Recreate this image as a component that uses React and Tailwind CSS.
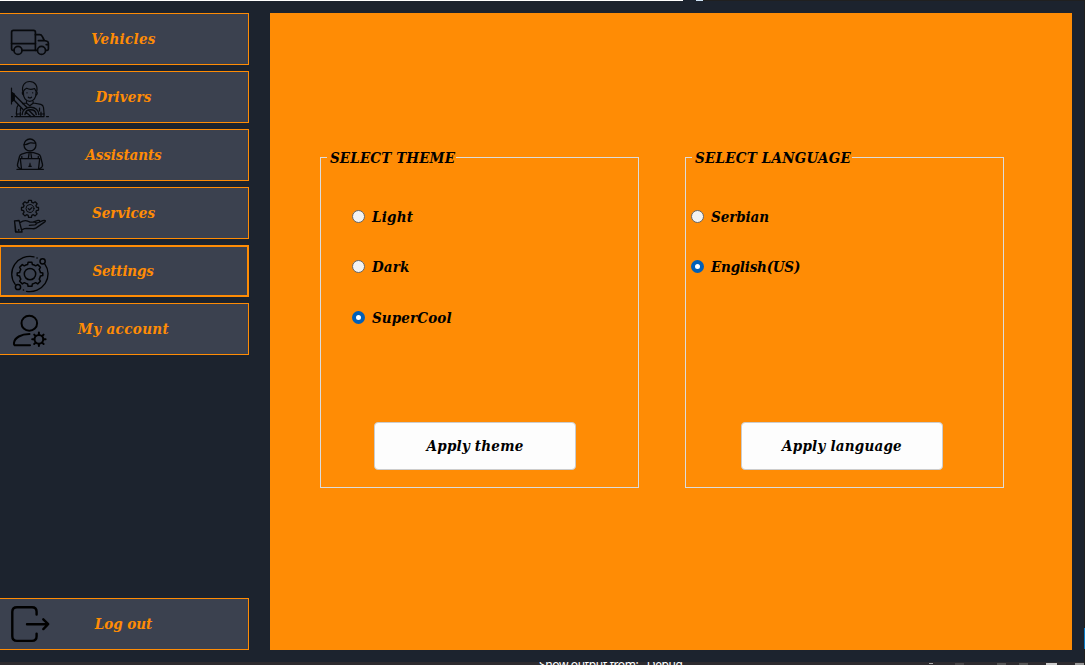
import React from "react";

function TruckIcon() {
  return (
    <svg className="h-[50px] w-[60px] shrink-0" viewBox="0 14 60 50" fill="none" stroke="#07090c" strokeWidth="1.7" strokeLinejoin="round" strokeLinecap="round">
      <path d="M14 50.3h-1.2q-1.2 0-1.2-1.2V32.2q0-1.8 1.8-1.8h20.2q1.8 0 1.8 1.8v18.1H22.3" />
      <path d="M11.6 43.6h23.8M35.4 34.6h4.4q1.6 0 2.3 1.5l2.2 4.4 2.7.8q1.4.5 1.4 2v5.8q0 1.2-1.2 1.2h-1.4M37.3 50.3h-1.900M38.400 40.600h5.700M46.200 44.600h2" />
      <circle cx="18" cy="50.4" r="4" />
      <circle cx="41.5" cy="50.4" r="4" />
    </svg>
  );
}

function DriverIcon() {
  return (
    <svg className="h-[50px] w-[60px] shrink-0" viewBox="0 72 60 50" fill="none" stroke="#07090c" strokeWidth="1.2" strokeLinejoin="round" strokeLinecap="round">
      <path d="M23.400 95c-1.300-.8-1.400-2.700-.5-3.300-1.500-6.300 2-10.200 6.900-10.200s8.400 4 6.800 10.200c1 .8.800 2.600-.5 3.300" />
      <path d="M23.400 92c-.4 6 2.600 9.400 6.300 9.400s6.700-3.400 6.400-9.400M23.400 91.500c.6-1.600 1.600-2.400 3.200-3.200 2.300 1.200 5.700 1.200 8 .2l1.500 3M28.300 97.200q1.600 1.500 3.200 0" />
      <path d="M27 92.500v.6M32.700 92.500v.6" strokeWidth="0.900" />
      <path d="M11.500 88v16" strokeWidth="1.200" />
      <path d="M12 92.500l2.300 1.500v6l-2.300 1.500z" fill="#07090c" />
      <path d="M14 94.500l13 13M13.500 99.500l9.500 10" strokeWidth="1.400" />
      <path d="M26.500 101.400v1.800l3.300 2.600 3.300-2.600v-1.800M33.500 103l7.300 1.300q2.400.7 2.700 3.200l.6 6.500h-4M26 103l-3.500.6M18.400 104.800l-1.400 2.500-.7 6.700h4M20.500 111v-3M39.500 111v-3" />
      <path d="M22.200 114.500c0-4.400 3.600-7.200 8.300-7.200s8.300 2.800 8.300 7.200M25 114.500c.3-3 2.500-4.700 5.600-4.700s5.300 1.700 5.600 4.700M25.800 112l5 4.500M28.500 110l6 6" strokeWidth="1.400" />
      <path d="M16.800 114v2.500M20.300 112v4.500M41 112v4.500M44 114v2.500M11.500 116.600h1M15 116.600h29M46.500 116.600h2" />
    </svg>
  );
}

function AssistantIcon() {
  return (
    <svg className="h-[50px] w-[60px] shrink-0" viewBox="0 130 60 50" fill="none" stroke="#07090c" strokeWidth="1.300" strokeLinejoin="round" strokeLinecap="round">
      <circle cx="30" cy="145" r="6" />
      <path d="M24.200 144.500c3.500.5 4.800-1.700 6-1.700 1.500 0 3 .7 5.600 0" />
      <path d="M26.500 152.600l-4.800 1.600q-1.700.6-2.200 2.300l-2 8c-.4 2 .3 3 2.800 4.100M33.500 152.600l4.800 1.600q1.700.6 2.200 2.300l2 8c.4 2-.3 3-2.800 4.100M26.500 152.600h7M29 154l-.6 4M31 154l.6 4M21.800 158v-1.500M38.300 158v-1.500" />
      <path d="M21.500 169l-1.200-10.300h19.400L38.500 169M17 169.400h26.300" />
      <path d="M30 163.200v1.300M28.900 166.200l1.100-1.700 1.200 1.700z" strokeWidth="1" />
    </svg>
  );
}

function ServiceIcon() {
  return (
    <svg className="h-[50px] w-[60px] shrink-0" viewBox="0 188 60 50" fill="none" stroke="#07090c" strokeWidth="1.300" strokeLinejoin="round" strokeLinecap="round">
      <path d="M28.600 200.300h2.800l.4 2 1.500.7 1.800-1.200 2 2-1.200 1.800.6 1.500 2 .4v2.600l-2 .5-.6 1.500 1.200 1.800-2 2-1.800-1.200-1.500.7-.4 2h-2.800l-.4-2-1.500-.7-1.800 1.200-2-2 1.200-1.800-.6-1.500-2-.5v-2.600l2-.4.6-1.500-1.200-1.800 2-2 1.800 1.200 1.500-.7z" />
      <circle cx="30" cy="208.500" r="4" strokeWidth="1" />
      <path d="M28.300 208.600l1.300 1.300 2.300-2.300" />
      <path d="M14.500 220.800l4.600-.3 3 11.500h-6.600zM14.500 220.800l1.500 11.200M19.800 222.600c3-1.800 5.800-2.500 8-1.400l2.200 1h4.500c2.300 0 2.300 2.500.3 2.700l-5.500.4M36.300 223.300l6.500-2.700c2.200-.8 3.300.2 2 1.300l-8.600 6c-1.300.8-2.600 1-4 .8l-5.500-.3c-2.200 0-3 .5-5 1.500M33.500 221.800l4.500-1.400c1.400-.3 2 .3 1.600 1.200" />
      <path d="M18.700 229.800v.2" strokeWidth="1.800" />
    </svg>
  );
}

function SettingsIcon() {
  return (
    <svg className="h-[50px] w-[60px] shrink-0" viewBox="0 246 60 50" fill="none" stroke="#020304" strokeWidth="1.300" strokeLinejoin="round" strokeLinecap="round">
      <path d="M34 256.800a18.400 17.600 0 0 0-18.800 27.500M26.500 291.300a18.400 17.600 0 0 0 18.200-27.500" />
      <circle cx="42.600" cy="261.300" r="2.600" strokeWidth="1.500" />
      <circle cx="18" cy="287" r="2.600" strokeWidth="1.500" />
      <path d="M37 257.900l.1 0M23.400 290.100l.1 0" strokeWidth="1.500" />
      <circle cx="30" cy="274.100" r="5.700" strokeWidth="1.500" />
      <path strokeWidth="1.500" d="M28.100 262.300h3.800l.5 2.300q1.800.3 3.300 1.200l2-1.200 2.700 2.700-1.200 2q.9 1.500 1.200 3.200l2.400.5v2.500l-2.400.5q-.3 1.700-1.200 3.200l1.200 2-2.700 2.700-2-1.200q-1.500.9-3.300 1.200l-.5 2.400h-3.800l-.5-2.400q-1.800-.3-3.300-1.200l-2 1.200-2.700-2.700 1.200-2q-.9-1.500-1.200-3.200l-2.400-.5v-2.500l2.400-.5q.3-1.700 1.200-3.200l-1.200-2 2.700-2.700 2 1.200q1.500-.9 3.300-1.200z" />
    </svg>
  );
}

function AccountIcon() {
  return (
    <svg className="h-[50px] w-[60px] shrink-0" viewBox="0 304 60 50" fill="none" stroke="#000" strokeWidth="2" strokeLinejoin="round" strokeLinecap="round">
      <ellipse cx="29.300" cy="323.200" rx="7.800" ry="7.500" />
      <path d="M30 345.300H15.700c-1.500 0-1.900-1-1.700-2.500.7-5.300 7-8.600 15.500-8.700" />
      <circle cx="38.900" cy="339.300" r="4.400" />
      <path d="M38.900 332.600v2M38.900 344v2M32.200 339.300h2M43.600 339.300h2M34.200 334.600l1.400 1.400M42.200 342.600l1.400 1.400M34.200 344l1.400-1.400M42.200 336l1.400-1.400" />
    </svg>
  );
}

function LogoutIcon() {
  return (
    <svg className="h-[50px] w-[60px] shrink-0" viewBox="0 599 60 50" fill="none" stroke="#000" strokeWidth="2.400" strokeLinejoin="round" strokeLinecap="round">
      <path d="M36.600 614.500v-2.700q0-4.600-4.600-4.600H17q-4.700 0-4.700 4.600v24.500q0 4.600 4.700 4.600h15q4.600 0 4.600-4.600v-2.700" />
      <path d="M27 624.200h21M43.300 619.300l4.900 4.900-4.900 4.900" />
    </svg>
  );
}

const items = [
  { label: "Vehicles", Icon: TruckIcon, track: "tracking-[0.3px]" },
  { label: "Drivers", Icon: DriverIcon, track: "tracking-[0.15px]" },
  { label: "Assistants", Icon: AssistantIcon, track: "tracking-[-0.08px]" },
  { label: "Services", Icon: ServiceIcon, track: "tracking-[0.05px]" },
  { label: "Settings", Icon: SettingsIcon, track: "tracking-[-0.2px]", active: true },
  { label: "My account", Icon: AccountIcon, track: "tracking-[0.38px]" },
];

function NavButton({ label, Icon, track, active }) {
  return (
    <button
      className={
        "flex h-[52px] w-[249px] shrink-0 items-center border-[#ff8c05] bg-[#3b414f] text-[#ff8c05] " +
        (active ? "border-2 border-l" : "border border-l-0")
      }
    >
      <span className={active ? "-ml-px flex" : "flex"}>
        <Icon />
      </span>
      <span className={"mr-[61px] flex-1 whitespace-nowrap text-center " + track}>{label}</span>
    </button>
  );
}

function Radio({ name, label, checked, track = "" }) {
  return (
    <label className={"flex h-[19px] items-center gap-[7px] " + track}>
      <input
        type="radio"
        name={name}
        defaultChecked={checked}
        className="size-[13px] appearance-none rounded-full border border-[#666] bg-[#f3f3f3] checked:border-4 checked:border-[#005fb8] checked:bg-white"
      />
      <span className="pt-[2px]">{label}</span>
    </label>
  );
}

function Group({ title, track, children }) {
  return (
    <fieldset className="h-[340px] w-[319px] border border-[#dcdcdc]">
      <legend className={"ml-[6px] h-[19px] whitespace-nowrap pl-[3px] pr-px leading-[21px] " + track}>{title}</legend>
      {children}
    </fieldset>
  );
}

function ApplyButton({ children, className }) {
  return (
    <button className={"h-[48px] w-[202px] rounded-[4px] border border-[#ccc] bg-[#fdfdfd] tracking-[0.22px] " + className}>
      {children}
    </button>
  );
}

export default function App() {
  return (
    <div className="flex h-[665px] w-[1085px] overflow-hidden bg-[#1c232e] font-['DejaVu_Serif_Condensed','DejaVu_Serif',serif] text-[15px] font-bold italic leading-[19px] text-black">
      <div className="flex w-[1084px] shrink-0 flex-col">
        <div className="flex h-px shrink-0 bg-[#202020]">
          <div className="w-[683px] bg-white" />
          <div className="w-[13px] bg-[#1c232e]" />
          <div className="w-[7px] bg-[#cfe3f5]" />
        </div>
        <div className="flex h-[661px] shrink-0 pb-3 pt-3">
          <nav className="flex w-[270px] shrink-0 flex-col gap-[6px]">
            {items.map((item) => (
              <NavButton key={item.label} {...item} />
            ))}
            <div className="flex-1" />
            <NavButton label="Log out" Icon={LogoutIcon} track="tracking-[-0.05px]" />
          </nav>
          <main className="flex w-[802px] gap-[46px] bg-[#ff8c05] pl-[50px] pt-[135px]">
            <Group title="SELECT THEME" track="tracking-[0.12px]">
              <div className="flex flex-col pl-[31px] pt-[40px]">
                <Radio name="theme" label="Light" track="tracking-[0.2px]" />
                <div className="h-[31px]" />
                <Radio name="theme" label="Dark" track="tracking-[0.15px]" />
                <div className="h-8" />
                <Radio name="theme" label="SuperCool" checked track="tracking-[0.12px]" />
              </div>
              <ApplyButton className="ml-[53px] mt-[95px]">Apply theme</ApplyButton>
            </Group>
            <Group title="SELECT LANGUAGE" track="tracking-[0.22px]">
              <div className="flex flex-col gap-[31px] pl-[5px] pt-[40px]">
                <Radio name="language" label="Serbian" track="tracking-[-0.1px]" />
                <Radio name="language" label="English(US)" checked track="tracking-[-0.22px]" />
              </div>
              <ApplyButton className="ml-[55px] mt-[146px]">Apply language</ApplyButton>
            </Group>
          </main>
        </div>
        <div className="flex h-[3px] shrink-0 items-start overflow-hidden bg-[#2d2b2f] font-['Noto_Sans',sans-serif] text-[12px] font-normal not-italic text-white">
          <span className="ml-[539px] mt-[-5px] w-[109px] whitespace-nowrap leading-[16px] tracking-[-0.35px]">Show output from:</span>
          <span className="mt-[-5px] w-[285px] leading-[16px] tracking-[-0.4px]">Debug</span>
          <span className="mt-px h-px w-1 bg-[#aaa]" />
          <span className="ml-[22px] mt-px h-[2px] w-[10px] bg-[#484648]" />
          <span className="ml-[33px] mt-px h-[2px] w-[9px] bg-[#555]" />
          <span className="ml-[13px] mt-px h-[2px] w-[9px] bg-[#555]" />
          <span className="ml-[18px] mt-px h-[2px] w-[11px] bg-[#ccc]" />
          <span className="ml-[18px] mt-px h-[2px] w-[9px] bg-[#999]" />
        </div>
      </div>
      <div className="flex w-px flex-col bg-[#202020]">
        <div className="mt-[628px] h-[21px] bg-[#0a7bc4]" />
      </div>
    </div>
  );
}
